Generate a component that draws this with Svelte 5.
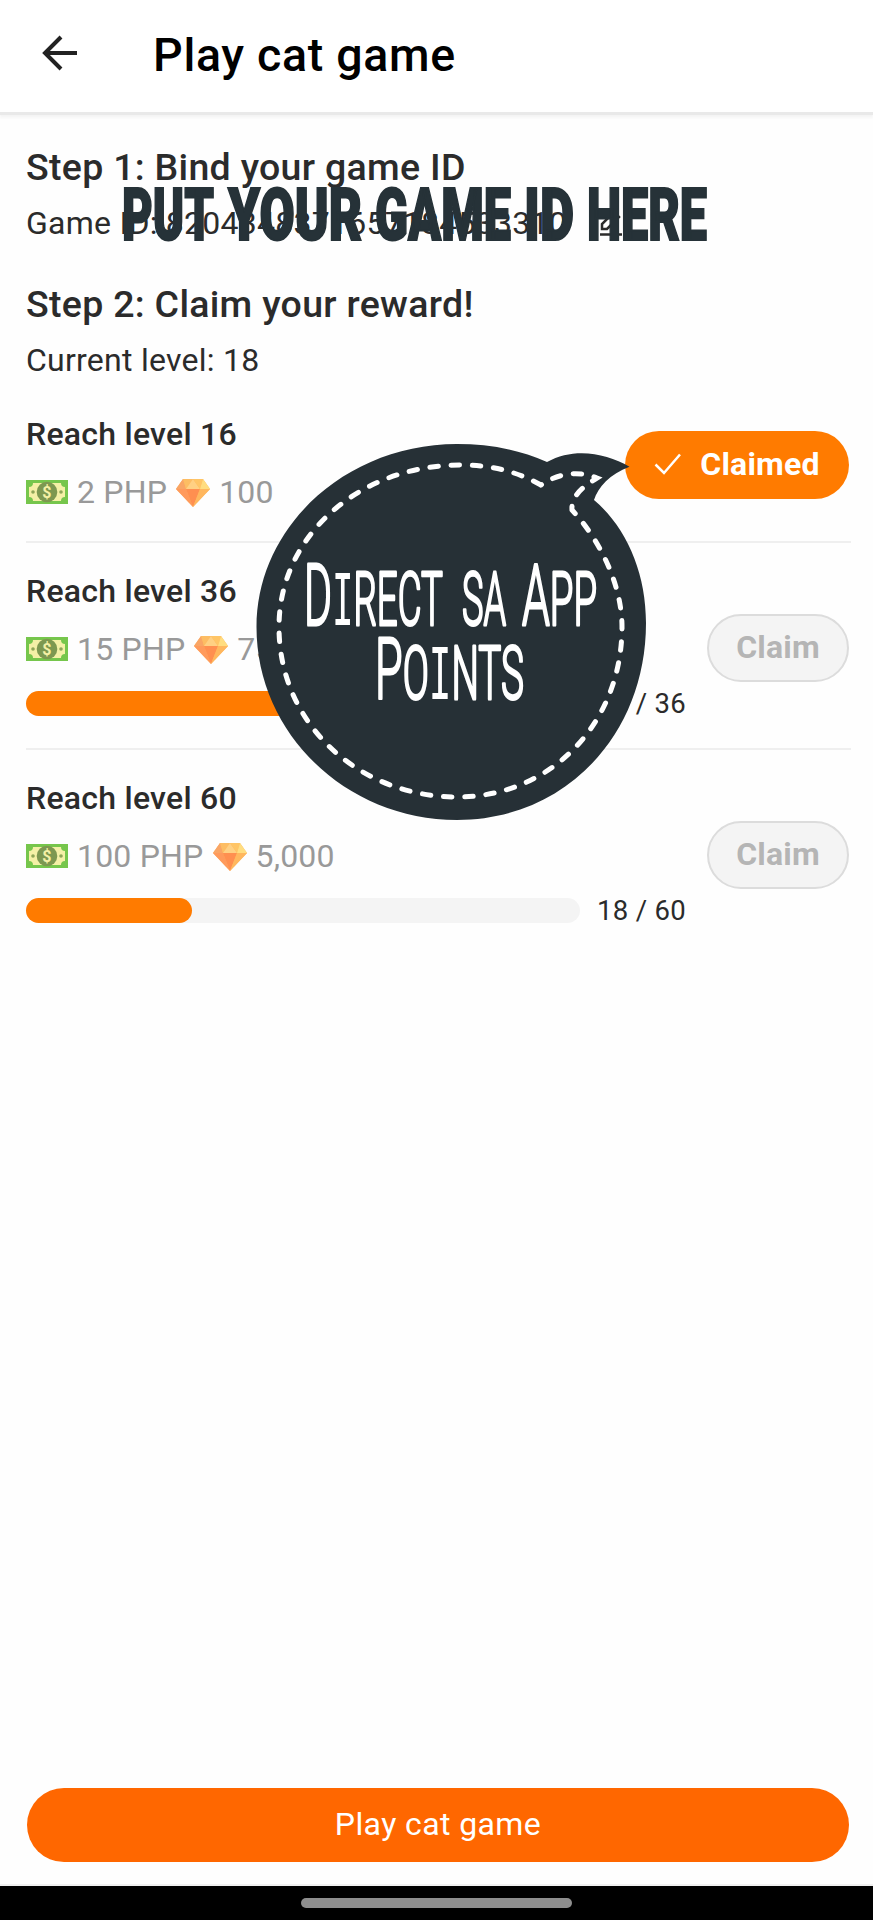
<script lang="ts">
  interface Level {
    target: number;
    php: string;
    points: string;
    claimed: boolean;
  }

  const gameId = "8204348371657184533310";
  const currentLevel = 18;

  const levels: Level[] = [
    { target: 16, php: "2", points: "100", claimed: true },
    { target: 36, php: "15", points: "750", claimed: false },
    { target: 60, php: "100", points: "5,000", claimed: false },
  ];

  // words of the banner: left edge and drawn width
  const banner = [
    { text: "PUT", x: 122, w: 92 },
    { text: "YOUR", x: 228, w: 134 },
    { text: "GAME", x: 375, w: 136 },
    { text: "ID", x: 524, w: 50 },
    { text: "HERE", x: 587, w: 120 },
  ];

  // hand-lettered small caps; an upper-case first letter is drawn taller
  const lettering = [
    { text: "Direct", x: 304, y: 625, w: 139 },
    { text: "sa", x: 462, y: 625, w: 44 },
    { text: "App", x: 522, y: 625, w: 75 },
    { text: "Points", x: 375, y: 699, w: 149 },
  ];
</script>

{#snippet money()}
  <svg class="money" viewBox="0 0 42 24">
    <rect width="42" height="24" fill="#76c64c" />
    <path d="M7 3h28a4 4 0 0 0 4 4v10a4 4 0 0 0-4 4H7a4 4 0 0 0-4-4V7a4 4 0 0 0 4-4z" fill="#f4f0a6" />
    <circle cx="21" cy="12" r="10.3" fill="#7d9850" />
    <circle cx="7" cy="12" r="1.8" fill="#8fa557" />
    <circle cx="35" cy="12" r="1.8" fill="#8fa557" />
    <text x="21" y="17.5" text-anchor="middle">$</text>
  </svg>
{/snippet}

{#snippet gem()}
  <svg class="gem" viewBox="0 0 34 29">
    <path d="M7 1h20l7 10-17 18L0 11z" fill="#fdb45c" />
    <path d="M7 1 0 11h10z" fill="#f9a565" />
    <path d="M7 1h10l-7 10z" fill="#fdbd63" />
    <path d="M17 1 10 11h14z" fill="#ffd083" />
    <path d="M17 1h10l-3 10z" fill="#ffc566" />
    <path d="M27 1l7 10H24z" fill="#ffdd80" />
    <path d="M0 11h10l7 18z" fill="#ff9a5c" />
    <path d="M10 11h14l-7 18z" fill="#ff8f50" />
    <path d="M24 11h10L17 29z" fill="#ffb75e" />
  </svg>
{/snippet}

<div class="screen">
  <header>
    <svg class="back" viewBox="0 0 36 36">
      <path d="M19 2 3 18l16 16M3 18h32" />
    </svg>
    <h1>Play cat game</h1>
  </header>

  <main>
    <h2>Step 1: Bind your game ID</h2>
    <p class="info">
      <span>Game ID: {gameId}</span>
      <svg class="edit" viewBox="0 0 24 26">
        <path d="M1 24.5h22M3 19V14L15 2l5 5L8 19z" />
      </svg>
    </p>

    <h2 class="second">Step 2: Claim your reward!</h2>
    <p class="info">Current level: {currentLevel}</p>

    <ul>
      {#each levels as level (level.target)}
        <li>
          <div class="detail">
            <h3>Reach level {level.target}</h3>
            <div class="reward">
              {@render money()}
              <span>{level.php} PHP</span>
              {@render gem()}
              <span>{level.points}</span>
            </div>
            {#if !level.claimed}
              <div class="progress">
                <div class="track">
                  <div class="fill" style="width: {(currentLevel / level.target) * 100}%"></div>
                </div>
                <span>{currentLevel} / {level.target}</span>
              </div>
            {/if}
          </div>
          {#if level.claimed}
            <button class="claimed">
              <svg viewBox="0 0 28 22"><path d="M1.5 11.5 10 20 26 1.5" /></svg>
              Claimed
            </button>
          {:else}
            <button disabled>Claim</button>
          {/if}
        </li>
      {/each}
    </ul>
  </main>

  <footer>
    <button class="play">Play cat game</button>
  </footer>
  <div class="navbar"><span></span></div>

  <svg class="overlay" viewBox="0 0 873 1920">
    <g class="banner">
      {#each banner as word}
        <text x={word.x} y="240" textLength={word.w} lengthAdjust="spacingAndGlyphs">{word.text}</text>
      {/each}
    </g>
    <path
      class="bubble"
      d="M547 462C518 449 488 444 457 444C347 444 256.500 526 256.500 627C256.500 734 347 820 457 820C565 820 646 735 646 623C646 572 626 527 594 500C598 487 610 474 629.5 466.7C606 453 574 447 547 462Z"
    />
    <path
      class="stitch"
      d="M541 485C516 471 490 465 461 465C360 465 279 535 279 627C279 725 360 797 457 797C552 797 622 722 622 627C622 585 600 540 572 510C571 498 580 488 597 478C580 471 560 472 541 485"
    />
    <g class="lettering">
      {#each lettering as word}
        <text x={word.x} y={word.y} textLength={word.w} lengthAdjust="spacingAndGlyphs"
          >{#each word.text as ch}<tspan class:big={ch !== ch.toLowerCase()} class:slab={ch === "i"}>{ch.toUpperCase()}</tspan>{/each}</text
        >
      {/each}
    </g>
  </svg>
</div>

<style>
  :global(body) {
    background: #fefefe;
  }

  .screen {
    position: relative;
    display: flex;
    flex-direction: column;
    height: 1920px;
    overflow: hidden;
    font-family: Roboto, sans-serif;
    color: #2b2b2b;
    background: #fefefe;
  }

  h1,
  h2,
  h3,
  p,
  ul {
    margin: 0;
    padding: 0;
    font-weight: 500;
  }

  header {
    display: flex;
    align-items: center;
    box-sizing: border-box;
    height: 112px;
    padding: 0 42px 3px;
    background: #fff;
    box-shadow: 0 3px 1px #e9e9e9, 0 6px 2px #f6f6f6;
  }

  .back {
    width: 36px;
    height: 36px;
    margin: 0 75px 3px 0;
    fill: none;
    stroke: #222;
    stroke-width: 4;
  }

  h1 {
    font-size: 46.5px;
    line-height: 56px;
    letter-spacing: 0.7px;
    color: #000;
  }

  main {
    flex: 1;
    padding: 33px 22px 0 26px;
  }

  h2 {
    font-size: 37.5px;
    line-height: 44px;
    letter-spacing: 0.3px;
  }

  h2.second {
    margin-top: 40px;
  }

  .info {
    display: flex;
    align-items: center;
    margin-top: 15px;
    font-size: 32px;
    font-weight: 400;
    line-height: 38px;
    letter-spacing: 0.25px;
  }

  .edit {
    width: 24px;
    height: 26px;
    margin-left: 32px;
    fill: none;
    stroke: #2b2b2b;
    stroke-width: 2.5;
  }

  ul {
    list-style: none;
    margin-top: 7px;
    font-weight: 400;
  }

  li {
    display: flex;
    align-items: center;
    padding: 29px 2px 30px 0;
    border-bottom: 2px solid #efefef;
  }

  li:last-child {
    border: 0;
  }

  .detail {
    flex: 1;
  }

  h3 {
    font-size: 32px;
    line-height: 38px;
    letter-spacing: 0.25px;
  }

  .reward {
    display: flex;
    align-items: center;
    margin-top: 20px;
    font-size: 32px;
    line-height: 38px;
    letter-spacing: 0.2px;
    color: #999;
  }

  .money {
    width: 42px;
    height: 24px;
    margin-right: 9px;
  }

  .money text {
    font-size: 16px;
    font-weight: 700;
    fill: #f4f0a6;
  }

  .gem {
    width: 34px;
    height: 29px;
    margin: 0 9px;
  }

  .progress {
    display: flex;
    align-items: center;
    gap: 17px;
    height: 25px;
    margin: 23px 0 2px;
    font-size: 27.5px;
    letter-spacing: 0.3px;
  }

  .track {
    width: 554px;
    height: 25px;
    border-radius: 13px;
    background: #f4f4f4;
  }

  .fill {
    height: 100%;
    border-radius: 13px;
    background: #ff7b00;
  }

  button {
    box-sizing: border-box;
    width: 142px;
    height: 68px;
    padding: 0 0 2px;
    border: 2px solid #dcdcdc;
    border-radius: 34px;
    background: #f4f4f4;
    color: #b5b5b5;
    font: 700 32px Roboto, sans-serif;
    letter-spacing: 0.2px;
  }

  button:disabled {
    margin-top: 5px;
  }

  .claimed {
    display: flex;
    align-items: center;
    justify-content: center;
    gap: 18px;
    width: 224px;
    margin-top: 4px;
    border: 0;
    background: #ff7b00;
    color: #fff;
  }

  .claimed svg {
    width: 28px;
    height: 22px;
    fill: none;
    stroke: #fff;
    stroke-width: 2.5;
  }

  footer {
    padding: 0 24px 22px 27px;
    border-bottom: 2px solid #f0f0f0;
  }

  .play {
    display: block;
    width: 100%;
    height: 74px;
    border: 0;
    border-radius: 37px;
    background: #ff6700;
    color: #fff;
    font-size: 32px;
    font-weight: 400;
    letter-spacing: 0.4px;
  }

  .navbar {
    display: flex;
    justify-content: center;
    height: 34px;
    background: #000;
  }

  .navbar span {
    width: 271px;
    height: 10px;
    margin-top: 12px;
    border-radius: 5px;
    background: #8e8e8e;
  }

  .overlay {
    position: absolute;
    inset: 0;
    width: 873px;
    height: 1920px;
    pointer-events: none;
  }

  .banner {
    font-size: 72px;
    font-weight: 900;
    fill: #263238;
    stroke: #263238;
    stroke-width: 2;
  }

  .bubble {
    fill: #263036;
  }

  .stitch {
    fill: none;
    stroke: #fff;
    stroke-width: 5;
    stroke-linecap: round;
    stroke-dasharray: 8.5 12.7;
  }

  .lettering {
    font-size: 74px;
    font-weight: 300;
    fill: #fff;
    stroke: #fff;
    stroke-width: 3;
    stroke-linejoin: round;
  }

  .lettering .big {
    font-size: 86px;
  }

  .lettering .slab {
    font-family: "DejaVu Sans Mono", monospace;
    font-size: 72px;
    stroke-width: 0;
  }
</style>
